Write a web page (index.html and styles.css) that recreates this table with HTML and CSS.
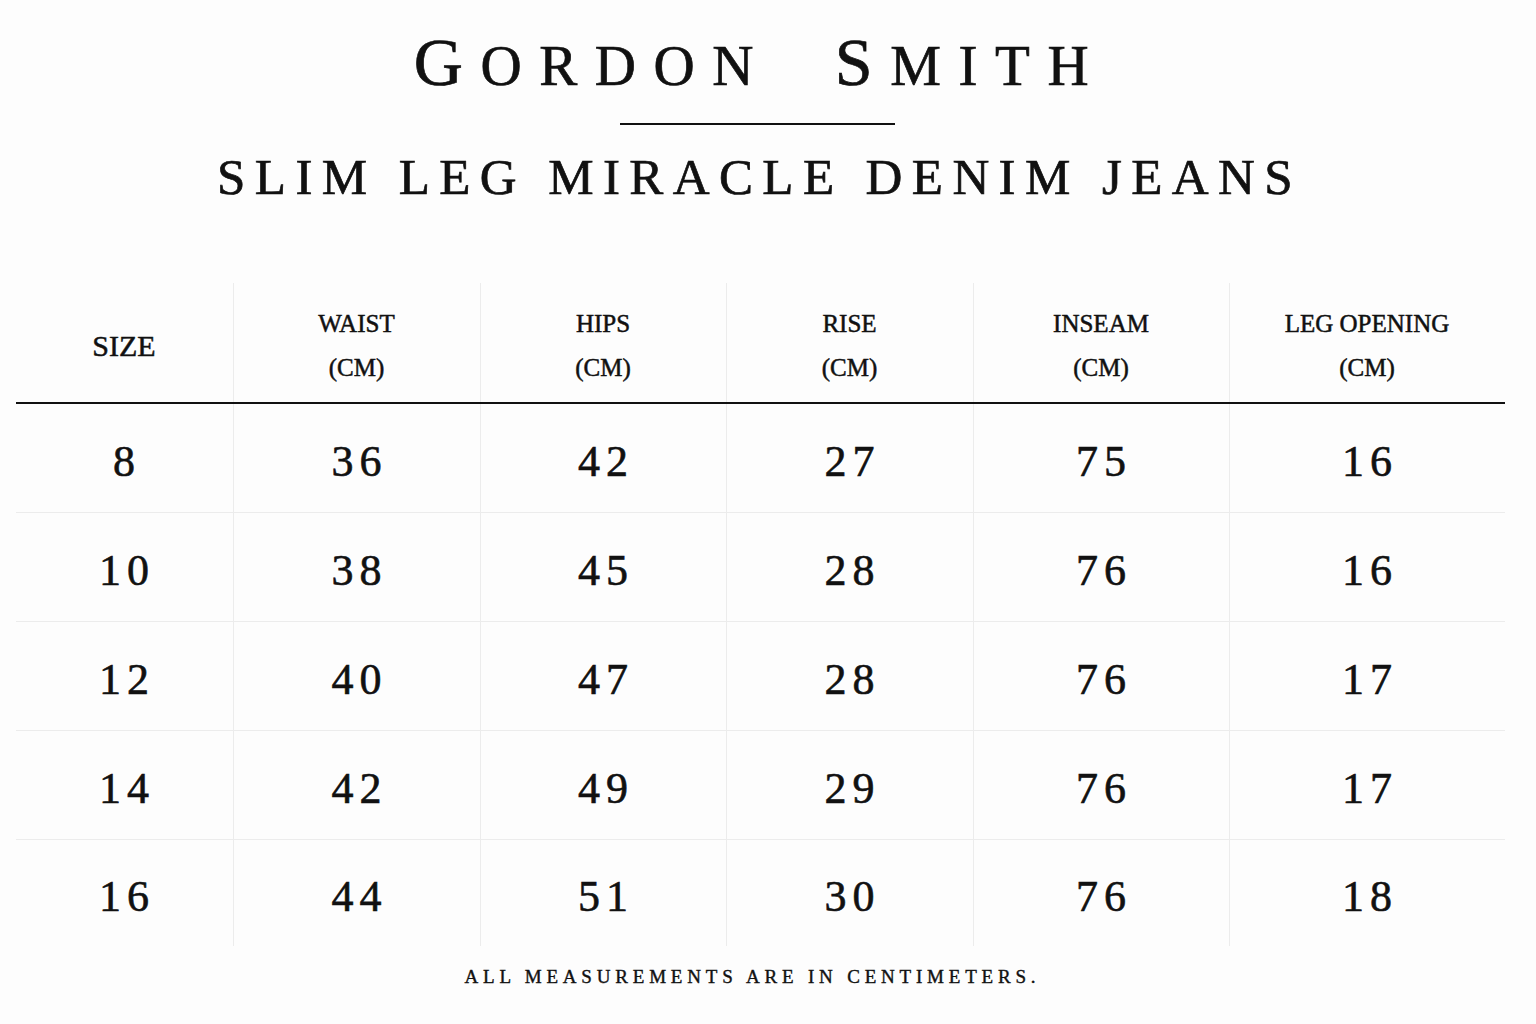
FILE: index.html
```html
<!DOCTYPE html>
<html>
<head>
<meta charset="utf-8">
<link rel="stylesheet" href="styles.css">
</head>
<body>
<div class="page">
  <header class="head">
    <h1 class="brand"><span class="cap">G</span>ordon&nbsp;&nbsp;<span class="cap">S</span>mith</h1>
    <div class="rule"></div>
    <h2 class="product">SLIM LEG MIRACLE DENIM JEANS</h2>
  </header>
  <table class="sizes">
    <thead>
      <tr>
        <th class="size-h">SIZE</th>
        <th>WAIST<br>(CM)</th>
        <th>HIPS<br>(CM)</th>
        <th>RISE<br>(CM)</th>
        <th>INSEAM<br>(CM)</th>
        <th>LEG OPENING<br>(CM)</th>
      </tr>
    </thead>
    <tbody>
      <tr><td>8</td><td>36</td><td>42</td><td>27</td><td>75</td><td>16</td></tr>
      <tr><td>10</td><td>38</td><td>45</td><td>28</td><td>76</td><td>16</td></tr>
      <tr><td>12</td><td>40</td><td>47</td><td>28</td><td>76</td><td>17</td></tr>
      <tr><td>14</td><td>42</td><td>49</td><td>29</td><td>76</td><td>17</td></tr>
      <tr><td>16</td><td>44</td><td>51</td><td>30</td><td>76</td><td>18</td></tr>
    </tbody>
  </table>
  <p class="note">ALL MEASUREMENTS ARE IN CENTIMETERS.</p>
</div>
</body>
</html>
```
FILE: styles.css
```css
html, body {
  margin: 0;
  padding: 0;
  background: #fdfdfd;
}
body {
  font-family: "Liberation Serif", "Times New Roman", serif;
  color: #111;
}
.page {
  width: 1484px;
  margin-left: 18px;
  display: flex;
  flex-direction: column;
  align-items: center;
}
.head {
  display: flex;
  flex-direction: column;
  align-items: center;
  padding-top: 27px;
}
.brand {
  margin: 0;
  font-weight: normal;
  font-size: 57px;
  line-height: 70px;
  letter-spacing: 17.6px;
  text-transform: uppercase;
  padding-left: 18px;
  padding-right: 18px;
  -webkit-text-stroke: 0.7px #111;
}
.brand .cap {
  font-size: 68px;
}
.rule {
  width: 275px;
  height: 2px;
  background: #111;
  margin-top: 22px;
  margin-right: 4px;
}
.product {
  margin: 22px 0 0 0;
  font-weight: normal;
  font-size: 51px;
  line-height: 60px;
  letter-spacing: 9.4px;
  padding-left: 9px;
  padding-right: 10px;
  -webkit-text-stroke: 0.7px #111;
}
.sizes {
  margin-top: 76px;
  width: 1484px;
  border-collapse: collapse;
  table-layout: fixed;
}
.sizes th:nth-child(1) { width: 217px; }
.sizes th:nth-child(2) { width: 246px; }
.sizes th:nth-child(3) { width: 245px; }
.sizes th:nth-child(4) { width: 246px; }
.sizes th:nth-child(5) { width: 255px; }
.sizes th:nth-child(6) { width: 275px; }
.sizes th {
  height: 113px;
  font-weight: normal;
  font-size: 25px;
  line-height: 44px;
  padding: 6px 0 0 0;
  border-bottom: 2px solid #111;
  border-left: 1px solid #ececec;
  text-align: center;
  vertical-align: middle;
  -webkit-text-stroke: 0.5px #111;
}
.sizes th.size-h {
  font-size: 30px;
}
.sizes th:first-child, .sizes td:first-child {
  border-left: none;
}
.sizes td {
  height: 102px;
  padding: 6px 0 0 0;
  font-size: 44px;
  letter-spacing: 6px;
  text-indent: 6px;
  text-align: center;
  vertical-align: middle;
  border-left: 1px solid #ececec;
  border-bottom: 1px solid #ececec;
  -webkit-text-stroke: 0.6px #111;
}
.sizes tbody tr:last-child td {
  border-bottom: none;
  height: 100px;
}
.note {
  margin: 20px 0 0 0;
  font-size: 19px;
  letter-spacing: 4.8px;
  padding-left: 5px;
  padding-right: 20px;
  -webkit-text-stroke: 0.4px #111;
}
```
